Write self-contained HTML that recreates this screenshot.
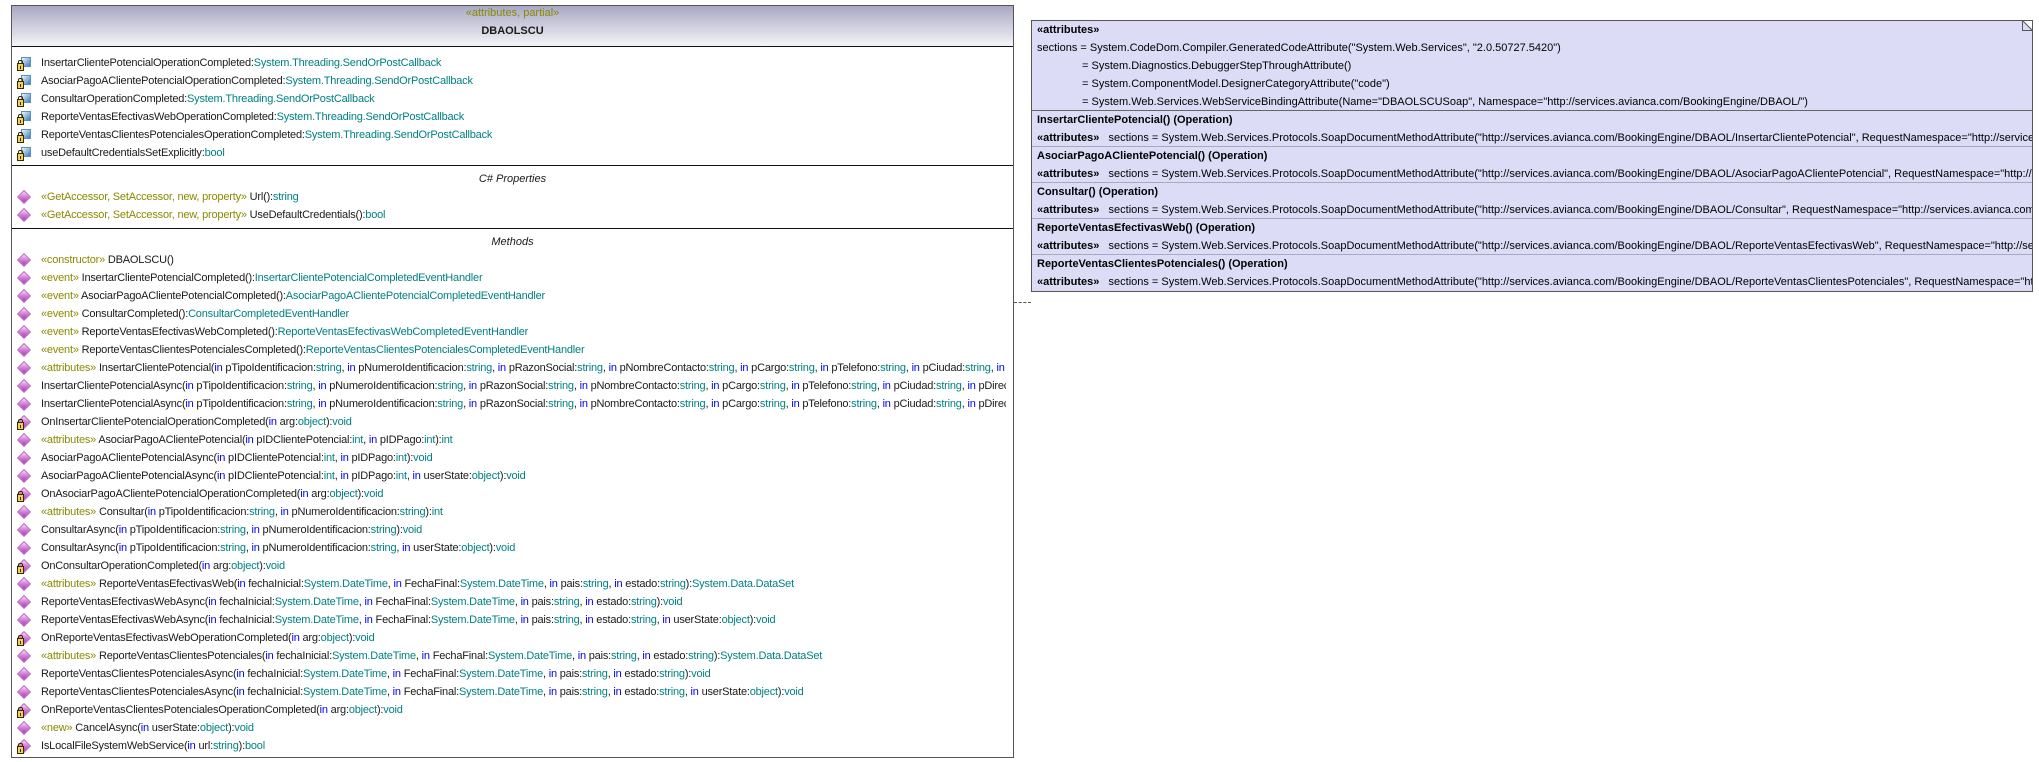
<!DOCTYPE html>
<html><head><meta charset="utf-8">
<style>
*{margin:0;padding:0;box-sizing:border-box}
body{width:2039px;height:762px;background:#fff;position:relative;overflow:hidden;font-family:"Liberation Sans",Arial,sans-serif;font-size:11px;color:#1a1a1a}
#cls{position:absolute;left:11px;top:5px;width:1003px;height:753px;border:1px solid #555;overflow:hidden;background:#fff}
#hdr{position:absolute;left:0;top:0;width:100%;height:41px;background:linear-gradient(#a8a8c4,#f4f4f8);border-bottom:1px solid #111}
.sep{position:absolute;left:0;width:100%;height:0;border-top:1px solid #111}
.r{position:absolute;left:3px;padding-left:26px;height:18px;line-height:18px;white-space:nowrap;width:991px;overflow:hidden;letter-spacing:-0.2px}
.d{position:absolute;left:4px;top:4px;width:10px;height:10px;transform:rotate(45deg);background:linear-gradient(135deg,#f8e0f8,#d47ad8 50%,#a040b0);border:1px solid #b868c0}
.a{position:absolute;left:6px;top:3px;width:10px;height:10px;background:linear-gradient(135deg,#eef6fc,#3d7fb8);border:1px solid #5a8fbf}
.l{position:absolute;left:2px;top:9px;width:7px;height:8px;background:#f0d060;border:1px solid #3a2a00}
.l::before{content:"";position:absolute;left:0px;top:-4px;width:3px;height:3px;border:1px solid #3a2a00;border-bottom:none;border-radius:2px 2px 0 0}
.l::after{content:"";position:absolute;left:2px;top:2px;width:1px;height:3px;background:#3a2a00}
.s{color:#8a8a00}.t{color:#008080}.k{color:#0000ee}
.lbl{position:absolute;left:0;width:100%;text-align:center;font-style:italic;height:18px;line-height:18px}
#note{position:absolute;left:1031px;top:20px;width:1002px;height:272px;background:#dcdcf6;border:1px solid #555;overflow:hidden}
.n{position:absolute;left:5px;height:18px;line-height:18px;white-space:nowrap;color:#000}
.b{font-weight:bold}
.nsep{position:absolute;left:0;width:100%;border-top:1px solid #a8a8c0}
</style></head><body>

<div id="cls">
<div id="hdr">
<div style="position:absolute;left:0;width:100%;top:1px;text-align:center;color:#8a8a00">«attributes, partial»</div>
<div style="position:absolute;left:0;width:100%;top:19px;text-align:center;font-weight:bold">DBAOLSCU</div>
</div>
<div class="r" style="top:48px"><i class="a"></i><i class="l"></i>InsertarClientePotencialOperationCompleted:<span class="t">System.Threading.SendOrPostCallback</span></div>
<div class="r" style="top:66px"><i class="a"></i><i class="l"></i>AsociarPagoAClientePotencialOperationCompleted:<span class="t">System.Threading.SendOrPostCallback</span></div>
<div class="r" style="top:84px"><i class="a"></i><i class="l"></i>ConsultarOperationCompleted:<span class="t">System.Threading.SendOrPostCallback</span></div>
<div class="r" style="top:102px"><i class="a"></i><i class="l"></i>ReporteVentasEfectivasWebOperationCompleted:<span class="t">System.Threading.SendOrPostCallback</span></div>
<div class="r" style="top:120px"><i class="a"></i><i class="l"></i>ReporteVentasClientesPotencialesOperationCompleted:<span class="t">System.Threading.SendOrPostCallback</span></div>
<div class="r" style="top:138px"><i class="a"></i><i class="l"></i>useDefaultCredentialsSetExplicitly:<span class="t">bool</span></div>

<div class="sep" style="top:159px"></div>
<div class="lbl" style="top:164px">C# Properties</div>
<div class="r" style="top:182px"><i class="d"></i><span class="s">«GetAccessor, SetAccessor, new, property»</span> Url():<span class="t">string</span></div>
<div class="r" style="top:200px"><i class="d"></i><span class="s">«GetAccessor, SetAccessor, new, property»</span> UseDefaultCredentials():<span class="t">bool</span></div>

<div class="sep" style="top:222px"></div>
<div class="lbl" style="top:227px">Methods</div>

<div class="r" style="top:245px"><i class="d"></i><span class="s">«constructor»</span> DBAOLSCU()</div>
<div class="r" style="top:263px"><i class="d"></i><span class="s">«event»</span> InsertarClientePotencialCompleted():<span class="t">InsertarClientePotencialCompletedEventHandler</span></div>
<div class="r" style="top:281px"><i class="d"></i><span class="s">«event»</span> AsociarPagoAClientePotencialCompleted():<span class="t">AsociarPagoAClientePotencialCompletedEventHandler</span></div>
<div class="r" style="top:299px"><i class="d"></i><span class="s">«event»</span> ConsultarCompleted():<span class="t">ConsultarCompletedEventHandler</span></div>
<div class="r" style="top:317px"><i class="d"></i><span class="s">«event»</span> ReporteVentasEfectivasWebCompleted():<span class="t">ReporteVentasEfectivasWebCompletedEventHandler</span></div>
<div class="r" style="top:335px"><i class="d"></i><span class="s">«event»</span> ReporteVentasClientesPotencialesCompleted():<span class="t">ReporteVentasClientesPotencialesCompletedEventHandler</span></div>
<div class="r" style="top:353px"><i class="d"></i><span class="s">«attributes»</span> InsertarClientePotencial(<span class="k">in</span> pTipoIdentificacion:<span class="t">string</span>, <span class="k">in</span> pNumeroIdentificacion:<span class="t">string</span>, <span class="k">in</span> pRazonSocial:<span class="t">string</span>, <span class="k">in</span> pNombreContacto:<span class="t">string</span>, <span class="k">in</span> pCargo:<span class="t">string</span>, <span class="k">in</span> pTelefono:<span class="t">string</span>, <span class="k">in</span> pCiudad:<span class="t">string</span>, <span class="k">in</span> pDireccion:<span class="t">string</span>):<span class="t">int</span></div>
<div class="r" style="top:371px"><i class="d"></i>InsertarClientePotencialAsync(<span class="k">in</span> pTipoIdentificacion:<span class="t">string</span>, <span class="k">in</span> pNumeroIdentificacion:<span class="t">string</span>, <span class="k">in</span> pRazonSocial:<span class="t">string</span>, <span class="k">in</span> pNombreContacto:<span class="t">string</span>, <span class="k">in</span> pCargo:<span class="t">string</span>, <span class="k">in</span> pTelefono:<span class="t">string</span>, <span class="k">in</span> pCiudad:<span class="t">string</span>, <span class="k">in</span> pDireccion:<span class="t">string</span>):<span class="t">void</span></div>
<div class="r" style="top:389px"><i class="d"></i>InsertarClientePotencialAsync(<span class="k">in</span> pTipoIdentificacion:<span class="t">string</span>, <span class="k">in</span> pNumeroIdentificacion:<span class="t">string</span>, <span class="k">in</span> pRazonSocial:<span class="t">string</span>, <span class="k">in</span> pNombreContacto:<span class="t">string</span>, <span class="k">in</span> pCargo:<span class="t">string</span>, <span class="k">in</span> pTelefono:<span class="t">string</span>, <span class="k">in</span> pCiudad:<span class="t">string</span>, <span class="k">in</span> pDireccion:<span class="t">string</span>):<span class="t">void</span></div>
<div class="r" style="top:407px"><i class="d"></i><i class="l"></i>OnInsertarClientePotencialOperationCompleted(<span class="k">in</span> arg:<span class="t">object</span>):<span class="t">void</span></div>
<div class="r" style="top:425px"><i class="d"></i><span class="s">«attributes»</span> AsociarPagoAClientePotencial(<span class="k">in</span> pIDClientePotencial:<span class="t">int</span>, <span class="k">in</span> pIDPago:<span class="t">int</span>):<span class="t">int</span></div>
<div class="r" style="top:443px"><i class="d"></i>AsociarPagoAClientePotencialAsync(<span class="k">in</span> pIDClientePotencial:<span class="t">int</span>, <span class="k">in</span> pIDPago:<span class="t">int</span>):<span class="t">void</span></div>
<div class="r" style="top:461px"><i class="d"></i>AsociarPagoAClientePotencialAsync(<span class="k">in</span> pIDClientePotencial:<span class="t">int</span>, <span class="k">in</span> pIDPago:<span class="t">int</span>, <span class="k">in</span> userState:<span class="t">object</span>):<span class="t">void</span></div>
<div class="r" style="top:479px"><i class="d"></i><i class="l"></i>OnAsociarPagoAClientePotencialOperationCompleted(<span class="k">in</span> arg:<span class="t">object</span>):<span class="t">void</span></div>
<div class="r" style="top:497px"><i class="d"></i><span class="s">«attributes»</span> Consultar(<span class="k">in</span> pTipoIdentificacion:<span class="t">string</span>, <span class="k">in</span> pNumeroIdentificacion:<span class="t">string</span>):<span class="t">int</span></div>
<div class="r" style="top:515px"><i class="d"></i>ConsultarAsync(<span class="k">in</span> pTipoIdentificacion:<span class="t">string</span>, <span class="k">in</span> pNumeroIdentificacion:<span class="t">string</span>):<span class="t">void</span></div>
<div class="r" style="top:533px"><i class="d"></i>ConsultarAsync(<span class="k">in</span> pTipoIdentificacion:<span class="t">string</span>, <span class="k">in</span> pNumeroIdentificacion:<span class="t">string</span>, <span class="k">in</span> userState:<span class="t">object</span>):<span class="t">void</span></div>
<div class="r" style="top:551px"><i class="d"></i><i class="l"></i>OnConsultarOperationCompleted(<span class="k">in</span> arg:<span class="t">object</span>):<span class="t">void</span></div>
<div class="r" style="top:569px"><i class="d"></i><span class="s">«attributes»</span> ReporteVentasEfectivasWeb(<span class="k">in</span> fechaInicial:<span class="t">System.DateTime</span>, <span class="k">in</span> FechaFinal:<span class="t">System.DateTime</span>, <span class="k">in</span> pais:<span class="t">string</span>, <span class="k">in</span> estado:<span class="t">string</span>):<span class="t">System.Data.DataSet</span></div>
<div class="r" style="top:587px"><i class="d"></i>ReporteVentasEfectivasWebAsync(<span class="k">in</span> fechaInicial:<span class="t">System.DateTime</span>, <span class="k">in</span> FechaFinal:<span class="t">System.DateTime</span>, <span class="k">in</span> pais:<span class="t">string</span>, <span class="k">in</span> estado:<span class="t">string</span>):<span class="t">void</span></div>
<div class="r" style="top:605px"><i class="d"></i>ReporteVentasEfectivasWebAsync(<span class="k">in</span> fechaInicial:<span class="t">System.DateTime</span>, <span class="k">in</span> FechaFinal:<span class="t">System.DateTime</span>, <span class="k">in</span> pais:<span class="t">string</span>, <span class="k">in</span> estado:<span class="t">string</span>, <span class="k">in</span> userState:<span class="t">object</span>):<span class="t">void</span></div>
<div class="r" style="top:623px"><i class="d"></i><i class="l"></i>OnReporteVentasEfectivasWebOperationCompleted(<span class="k">in</span> arg:<span class="t">object</span>):<span class="t">void</span></div>
<div class="r" style="top:641px"><i class="d"></i><span class="s">«attributes»</span> ReporteVentasClientesPotenciales(<span class="k">in</span> fechaInicial:<span class="t">System.DateTime</span>, <span class="k">in</span> FechaFinal:<span class="t">System.DateTime</span>, <span class="k">in</span> pais:<span class="t">string</span>, <span class="k">in</span> estado:<span class="t">string</span>):<span class="t">System.Data.DataSet</span></div>
<div class="r" style="top:659px"><i class="d"></i>ReporteVentasClientesPotencialesAsync(<span class="k">in</span> fechaInicial:<span class="t">System.DateTime</span>, <span class="k">in</span> FechaFinal:<span class="t">System.DateTime</span>, <span class="k">in</span> pais:<span class="t">string</span>, <span class="k">in</span> estado:<span class="t">string</span>):<span class="t">void</span></div>
<div class="r" style="top:677px"><i class="d"></i>ReporteVentasClientesPotencialesAsync(<span class="k">in</span> fechaInicial:<span class="t">System.DateTime</span>, <span class="k">in</span> FechaFinal:<span class="t">System.DateTime</span>, <span class="k">in</span> pais:<span class="t">string</span>, <span class="k">in</span> estado:<span class="t">string</span>, <span class="k">in</span> userState:<span class="t">object</span>):<span class="t">void</span></div>
<div class="r" style="top:695px"><i class="d"></i><i class="l"></i>OnReporteVentasClientesPotencialesOperationCompleted(<span class="k">in</span> arg:<span class="t">object</span>):<span class="t">void</span></div>
<div class="r" style="top:713px"><i class="d"></i><span class="s">«new»</span> CancelAsync(<span class="k">in</span> userState:<span class="t">object</span>):<span class="t">void</span></div>
<div class="r" style="top:731px"><i class="d"></i><i class="l"></i>IsLocalFileSystemWebService(<span class="k">in</span> url:<span class="t">string</span>):<span class="t">bool</span></div>
</div>

<div style="position:absolute;left:1014px;top:302px;width:17px;border-top:1px dashed #555"></div>

<div id="note">
<div class="n b" style="top:0px">«attributes»</div>
<div class="n" style="top:18px">sections = System.CodeDom.Compiler.GeneratedCodeAttribute("System.Web.Services", "2.0.50727.5420")</div>
<div class="n" style="top:36px;left:50px">= System.Diagnostics.DebuggerStepThroughAttribute()</div>
<div class="n" style="top:54px;left:50px">= System.ComponentModel.DesignerCategoryAttribute("code")</div>
<div class="n" style="top:72px;left:50px">= System.Web.Services.WebServiceBindingAttribute(Name="DBAOLSCUSoap", Namespace="http://services.avianca.com/BookingEngine/DBAOL/")</div>
<div class="nsep" style="top:89px;border-color:#666"></div>
<div class="n b" style="top:90px">InsertarClientePotencial() (Operation)</div>
<div class="n" style="top:108px"><b>«attributes»</b>&nbsp;&nbsp;&nbsp;sections = System.Web.Services.Protocols.SoapDocumentMethodAttribute("http://services.avianca.com/BookingEngine/DBAOL/InsertarClientePotencial", RequestNamespace="http://services.avianca.com/BookingEngine/DBAOL/")</div>
<div class="nsep" style="top:125px"></div>
<div class="n b" style="top:126px">AsociarPagoAClientePotencial() (Operation)</div>
<div class="n" style="top:144px"><b>«attributes»</b>&nbsp;&nbsp;&nbsp;sections = System.Web.Services.Protocols.SoapDocumentMethodAttribute("http://services.avianca.com/BookingEngine/DBAOL/AsociarPagoAClientePotencial", RequestNamespace="http://services.avianca.com/BookingEngine/DBAOL/")</div>
<div class="nsep" style="top:161px"></div>
<div class="n b" style="top:162px">Consultar() (Operation)</div>
<div class="n" style="top:180px"><b>«attributes»</b>&nbsp;&nbsp;&nbsp;sections = System.Web.Services.Protocols.SoapDocumentMethodAttribute("http://services.avianca.com/BookingEngine/DBAOL/Consultar", RequestNamespace="http://services.avianca.com/BookingEngine/DBAOL/")</div>
<div class="nsep" style="top:197px"></div>
<div class="n b" style="top:198px">ReporteVentasEfectivasWeb() (Operation)</div>
<div class="n" style="top:216px"><b>«attributes»</b>&nbsp;&nbsp;&nbsp;sections = System.Web.Services.Protocols.SoapDocumentMethodAttribute("http://services.avianca.com/BookingEngine/DBAOL/ReporteVentasEfectivasWeb", RequestNamespace="http://services.avianca.com/BookingEngine/DBAOL/")</div>
<div class="nsep" style="top:233px"></div>
<div class="n b" style="top:234px">ReporteVentasClientesPotenciales() (Operation)</div>
<div class="n" style="top:252px"><b>«attributes»</b>&nbsp;&nbsp;&nbsp;sections = System.Web.Services.Protocols.SoapDocumentMethodAttribute("http://services.avianca.com/BookingEngine/DBAOL/ReporteVentasClientesPotenciales", RequestNamespace="http://services.avianca.com/BookingEngine/DBAOL/")</div>
<svg style="position:absolute;right:-1px;top:-1px" width="11" height="11"><path d="M0 0 L11 11 L11 0 Z" fill="#fff"/><path d="M0.5 0.5 L10.5 10.5 M0.5 0.5 V10.5 H10.5" stroke="#555" fill="#dcdcf6" stroke-width="1"/></svg>
</div>
</body></html>
